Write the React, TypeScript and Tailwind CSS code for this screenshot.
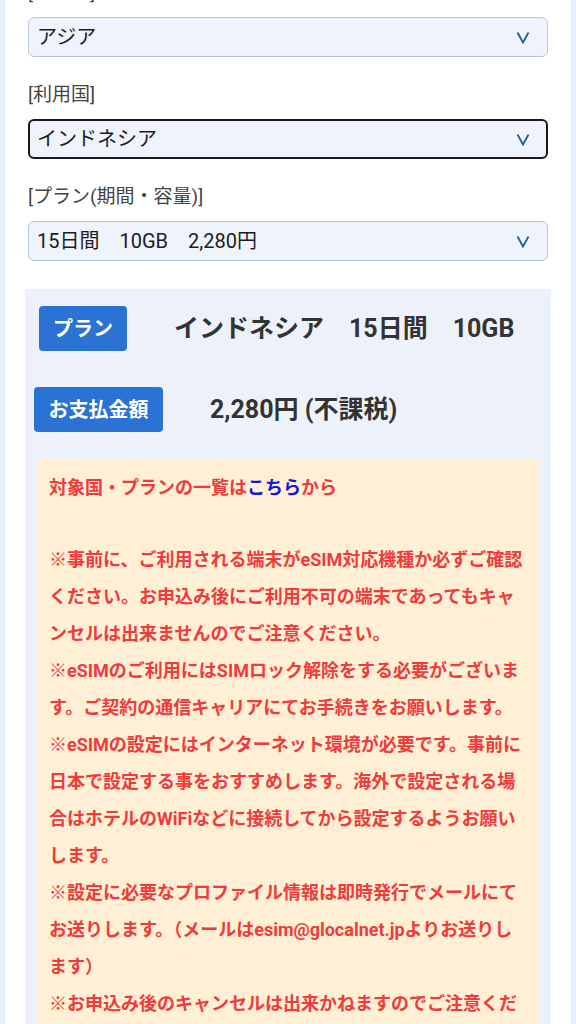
const font = "font-['Roboto','Noto_Sans_CJK_JP',sans-serif]";

function Chevron() {
  return (
    <svg width="14" height="13" viewBox="0 0 14 13" className="shrink-0">
      <polyline points="1.5,1.5 7,11.5 12.5,1.5" fill="none" stroke="#1c5f9e" strokeWidth="1.8" />
    </svg>
  );
}

function Field({ label, value, active }: { label: string; value: string; active?: boolean }) {
  return (
    <div className="mx-[3px] mb-[23px]">
      <p className="mb-[9px] text-[19px] leading-[30px] text-[#444]">{label}</p>
      <div
        className={
          active
            ? "flex h-10 items-center justify-between rounded-[6px] border-2 border-[#1a1a1a] bg-[#eef3fc] pl-[7px] pr-[16px]"
            : "flex h-10 items-center justify-between rounded-[6px] border border-[#b9c4de] bg-[#eef3fc] pl-2 pr-[17px]"
        }
      >
        <span className="text-[20px] text-[#1d1d1d]">{value}</span>
        <Chevron />
      </div>
    </div>
  );
}

export default function App() {
  const notes = [
    "※事前に、ご利用される端末がeSIM対応機種か必ずご確認ください。お申込み後にご利用不可の端末であってもキャンセルは出来ませんのでご注意ください。",
    "※eSIMのご利用にはSIMロック解除をする必要がございます。ご契約の通信キャリアにてお手続きをお願いします。",
    "※eSIMの設定にはインターネット環境が必要です。事前に日本で設定する事をおすすめします。海外で設定される場合はホテルのWiFiなどに接続してから設定するようお願いします。",
    "※設定に必要なプロファイル情報は即時発行でメールにてお送りします。（メールはesim@glocalnet.jpよりお送りします）",
    "※お申込み後のキャンセルは出来かねますのでご注意ください。",
  ];

  return (
    <div className={`min-h-screen bg-[#e6effc] px-[5px] ${font}`}>
      <div className="min-h-screen bg-white px-5">
        <div className="-mt-[22px]">
          <Field label="[エリア]" value="アジア" />
          <Field label="[利用国]" value="インドネシア" active />
          <Field label="[プラン(期間・容量)]" value="15日間　10GB　2,280円" />
        </div>

        <div className="mt-[28px] bg-[#edf2fa] p-3 pt-[17px]">
          <div className="flex items-center gap-[47px] pl-[2px]">
            <span className="flex h-[45px] w-[88px] items-center justify-center rounded-[4px] bg-[#2a72d3] text-[20px] font-bold text-white">
              プラン
            </span>
            <span className="text-[25px] font-bold text-[#333]">インドネシア　15日間　10GB</span>
          </div>

          <div className="-ml-[3px] mt-9 flex items-center gap-[47px]">
            <span className="flex h-[45px] w-[129px] items-center justify-center rounded-[4px] bg-[#2a72d3] text-[20px] font-bold text-white">
              お支払金額
            </span>
            <span className="text-[25px] font-bold text-[#333]">2,280円 (不課税)</span>
          </div>

          <div className="mt-[27px] bg-[#fff0d5] px-3 pt-[10px] pb-4 text-[18px] font-bold leading-[37px] text-[#f03a3c]">
            <p>
              対象国・プランの一覧は<a className="text-[#1515e0]">こちら</a>から
            </p>
            <div className="mt-[35px]">
              {notes.map((n) => (
                <p key={n}>{n}</p>
              ))}
            </div>
          </div>
        </div>
      </div>
    </div>
  );
}
